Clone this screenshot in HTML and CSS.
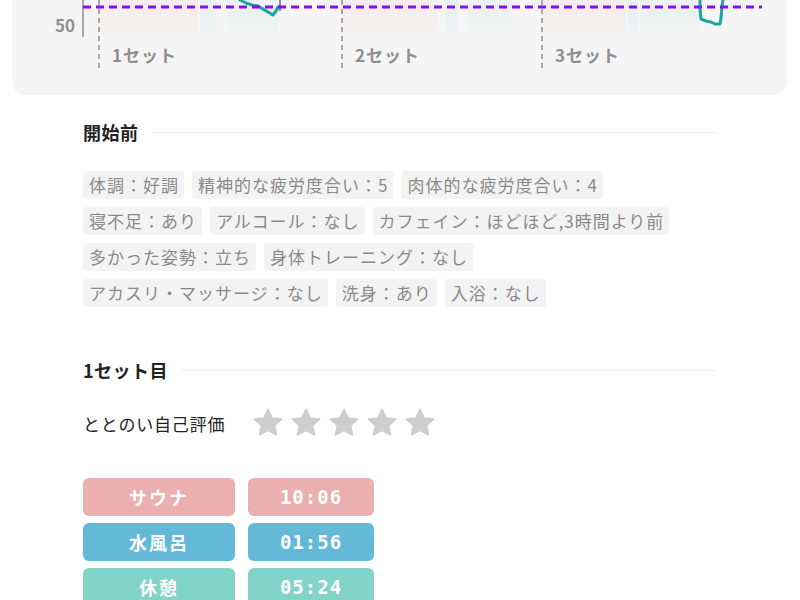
FILE: index.html
```html
<!DOCTYPE html>
<html lang="ja">

<head>
    <meta charset="UTF-8">
    <title>サウナ記録</title>
    <link rel="stylesheet" href="styles.css">
</head>

<body>
    <!-- 心拍グラフ（スクロール済みの下端部分） -->
    <div class="chart-card">
        <svg class="chart" width="775" height="95" viewBox="12 0 775 95">
            <defs>
                <linearGradient id="fade" x1="0" y1="0" x2="0" y2="1">
                    <stop offset="0" stop-color="#fff" stop-opacity="1" />
                    <stop offset="1" stop-color="#fff" stop-opacity="0.4" />
                </linearGradient>
                <mask id="bandMask">
                    <rect x="0" y="0" width="800" height="34" fill="url(#fade)" />
                </mask>
            </defs>

            <!-- 各セットの区間帯 -->
            <g mask="url(#bandMask)">
                <rect class="band sauna" x="99" y="0" width="99" height="33" />
                <rect class="band water" x="200" y="0" width="16" height="33" />
                <rect class="band rest" x="228" y="0" width="50" height="33" />
                <rect class="band sauna" x="342" y="0" width="95" height="33" />
                <rect class="band water" x="445" y="0" width="13" height="33" />
                <rect class="band rest" x="468" y="0" width="44" height="33" />
                <rect class="band sauna" x="542" y="0" width="84" height="33" />
                <rect class="band water" x="628" y="0" width="10" height="33" />
                <rect class="band rest" x="640" y="0" width="60" height="33" />
            </g>

            <line class="axis" x1="83" y1="0" x2="83" y2="37" />
            <text class="axis-label" x="75" y="32" text-anchor="end">50</text>

            <line class="set-line" x1="99" y1="0" x2="99" y2="70" />
            <line class="set-line" x1="342" y1="0" x2="342" y2="70" />
            <line class="set-line" x1="542" y1="0" x2="542" y2="70" />

            <line class="tick" x1="280" y1="0" x2="280" y2="11" />

            <polyline class="hr" points="240,0 246,3 252,5 258,6 263,9 268,12 273,15 276,11 278,7" />
            <polyline class="hr" points="700,0 700,9 701,19 706,21 711,22 715,24 720,24 721,18 722,6 723,0" />

            <line class="target" x1="83" y1="7" x2="762" y2="7" />

            <text class="set-label" x="112" y="62">1セット</text>
            <text class="set-label" x="355" y="62">2セット</text>
            <text class="set-label" x="555" y="62">3セット</text>
        </svg>
    </div>

    <main class="content">
        <section class="block before">
            <h2 class="block-title">開始前</h2>
            <div class="tags">
                <div class="tag-row">
                    <span class="tag">体調：好調</span>
                    <span class="tag">精神的な疲労度合い：5</span>
                    <span class="tag">肉体的な疲労度合い：4</span>
                </div>
                <div class="tag-row">
                    <span class="tag">寝不足：あり</span>
                    <span class="tag">アルコール：なし</span>
                    <span class="tag">カフェイン：ほどほど,3時間より前</span>
                </div>
                <div class="tag-row">
                    <span class="tag">多かった姿勢：立ち</span>
                    <span class="tag">身体トレーニング：なし</span>
                </div>
                <div class="tag-row">
                    <span class="tag">アカスリ・マッサージ：なし</span>
                    <span class="tag">洗身：あり</span>
                    <span class="tag">入浴：なし</span>
                </div>
            </div>
        </section>

        <section class="block set">
            <h2 class="block-title">1セット目</h2>
            <div class="rating">
                <span class="rating-label">ととのい自己評価</span>
                <div class="stars">
                    <svg class="star" viewBox="0 0 24 24"><polygon points="12,2.6 14.9,8.7 21.4,9.4 16.5,13.8 17.9,20.3 12,17 6.1,20.3 7.5,13.8 2.6,9.4 9.1,8.7" /></svg>
                    <svg class="star" viewBox="0 0 24 24"><polygon points="12,2.6 14.9,8.7 21.4,9.4 16.5,13.8 17.9,20.3 12,17 6.1,20.3 7.5,13.8 2.6,9.4 9.1,8.7" /></svg>
                    <svg class="star" viewBox="0 0 24 24"><polygon points="12,2.6 14.9,8.7 21.4,9.4 16.5,13.8 17.9,20.3 12,17 6.1,20.3 7.5,13.8 2.6,9.4 9.1,8.7" /></svg>
                    <svg class="star" viewBox="0 0 24 24"><polygon points="12,2.6 14.9,8.7 21.4,9.4 16.5,13.8 17.9,20.3 12,17 6.1,20.3 7.5,13.8 2.6,9.4 9.1,8.7" /></svg>
                    <svg class="star" viewBox="0 0 24 24"><polygon points="12,2.6 14.9,8.7 21.4,9.4 16.5,13.8 17.9,20.3 12,17 6.1,20.3 7.5,13.8 2.6,9.4 9.1,8.7" /></svg>
                </div>
            </div>

            <div class="phases">
                <div class="phase sauna">
                    <span class="phase-name">サウナ</span>
                    <span class="phase-time">10:06</span>
                </div>
                <div class="phase water">
                    <span class="phase-name">水風呂</span>
                    <span class="phase-time">01:56</span>
                </div>
                <div class="phase rest">
                    <span class="phase-name">休憩</span>
                    <span class="phase-time">05:24</span>
                </div>
            </div>
        </section>
    </main>
</body>

</html>
```

FILE: styles.css
```css
body {
    margin: 0;
    padding: 0;
    background: #fff;
    color: #222;
    font-family: "Noto Sans CJK JP", "Noto Sans", sans-serif;
    overflow: hidden;
}

/* グラフカード */
.chart-card {
    width: 775px;
    height: 95px;
    margin-left: 12px;
    background: #f5f5f5;
    border-radius: 0 0 14px 14px;
    overflow: hidden;
}

.chart {
    display: block;
}

.band {
    opacity: 0.1;
}

.band.sauna { fill: #f3a6a6; }
.band.water { fill: #6cc2e0; }
.band.rest { fill: #8fd9cf; }

.axis {
    stroke: #8e8e8e;
    stroke-width: 1.5;
}

.tick {
    stroke: #8e8e8e;
    stroke-width: 2;
}

.axis-label,
.set-label {
    font-family: "Noto Sans CJK JP", sans-serif;
    font-size: 17px;
    font-weight: bold;
    fill: #8f8f8f;
}

.set-label {
    letter-spacing: 1px;
}

.set-line {
    stroke: #8e8e8e;
    stroke-width: 1.5;
    stroke-dasharray: 5 4;
}

.hr {
    fill: none;
    stroke: #17a7a0;
    stroke-width: 3;
    stroke-linejoin: round;
    stroke-linecap: round;
}

.target {
    stroke: #8a0cf5;
    stroke-width: 3;
    stroke-dasharray: 8 5;
}

/* 本文 */
.content {
    width: 633px;
    margin-left: 83px;
}

.block-title {
    display: flex;
    align-items: center;
    gap: 14px;
    margin: 0;
    height: 24px;
    font-size: 18px;
    font-weight: bold;
    letter-spacing: 0.5px;
    color: #222;
}

.block-title::after {
    content: "";
    flex: 1;
    height: 1px;
    background: #ebebeb;
}

.before {
    margin-top: 25px;
}

.tags {
    display: flex;
    flex-direction: column;
    gap: 8px;
    margin-top: 27px;
}

.tag-row {
    display: flex;
    gap: 8px;
}

.tag {
    height: 28px;
    line-height: 28px;
    padding: 0 5px 0 6px;
    font-size: 17px;
    letter-spacing: 1px;
    color: #8a8a8a;
    background: #f3f3f3;
    border-radius: 4px;
    white-space: nowrap;
}

.set {
    margin-top: 51px;
}

.rating {
    display: flex;
    align-items: center;
    margin-top: 26px;
}

.rating-label {
    font-size: 17px;
    letter-spacing: 0.8px;
    color: #222;
    width: 168px;
}

.stars {
    display: flex;
    gap: 4px;
}

.star {
    width: 34px;
    height: 34px;
    margin: -2px 0;
}

.star polygon {
    fill: #cdcdcd;
    stroke: #cdcdcd;
    stroke-width: 1.4;
    stroke-linejoin: round;
}

.phases {
    display: flex;
    flex-direction: column;
    gap: 7px;
    margin-top: 40px;
}

.phase {
    display: flex;
    gap: 13px;
}

.phase span {
    height: 38px;
    line-height: 38px;
    text-align: center;
    color: #fff;
    border-radius: 6px;
}

.phase-name {
    width: 152px;
    font-size: 18px;
    font-weight: bold;
    letter-spacing: 2px;
}

.phase-time {
    width: 126px;
    font-family: "DejaVu Sans Mono", "Liberation Mono", monospace;
    font-size: 19px;
    font-weight: 600;
    letter-spacing: 1px;
}

.sauna span { background: #ebafaf; }
.water span { background: #63b9d7; }
.rest span { background: #82d3c8; }
```
